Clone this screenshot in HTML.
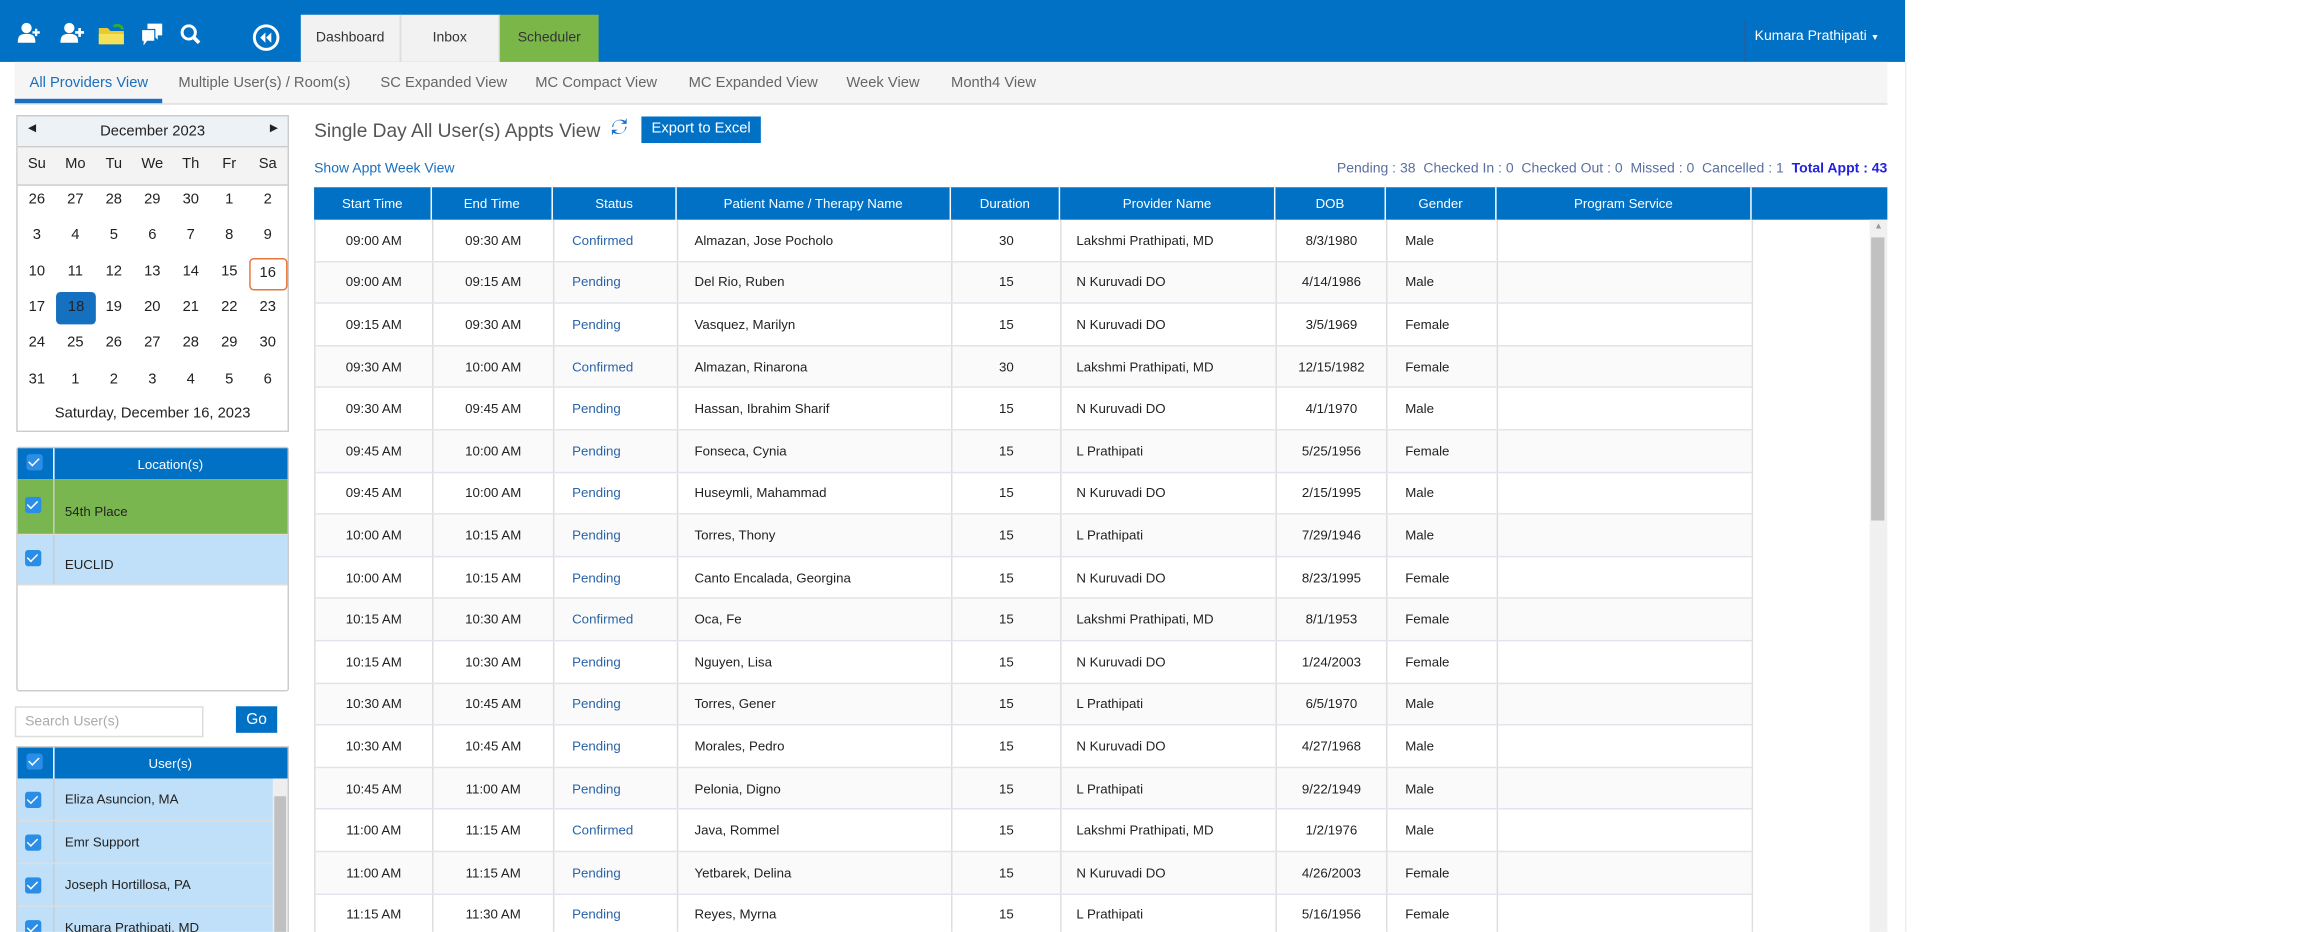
<!DOCTYPE html>
<html><head><meta charset="utf-8">
<style>
html,body{margin:0;padding:0;width:2312px;height:931px;overflow:hidden;background:#fff}
#w{position:absolute;left:0;top:0;width:1568px;height:632px;transform:scale(1.47449);transform-origin:0 0;font-family:"Liberation Sans",sans-serif;font-size:10px;color:#222;overflow:hidden}
.a{position:absolute}
.top{left:0;top:0;width:1292px;height:42px;background:#0071c5}
.tab{top:10px;height:32px;line-height:32px;text-align:center;font-size:9.5px;color:#333;background:#f2f2f2;border-right:1px solid #ddd}
.sub{left:10px;top:42px;width:1270px;height:28px;background:#f5f5f5;border-bottom:1px solid #ddd}
.sub span{position:absolute;top:9px;font-size:10px;color:#666}
.cal{left:11px;top:78px;width:183px;height:213px;border:1px solid #ccc}
.cal .d{position:absolute;width:26px;text-align:center;font-size:10px}
table{border-collapse:collapse}
.grid td{border-right:1px solid #ddd;border-bottom:1px solid #e2e4ec;height:27.6px;font-size:9px;padding:0}
.grid tr:nth-child(even) td{background:#fafafa}
.hd{left:213px;top:127px;height:22px;background:#0071c5;color:#fff;font-size:9px}
.hd div{position:absolute;top:0;height:22px;line-height:22px;text-align:center;border-right:1px solid #fff}
.cb{position:absolute;width:11px;height:11px;background:#2b8ee6;border-radius:2px}
.cb:after{content:"";position:absolute;left:3px;top:1px;width:3px;height:6px;border:solid #fff;border-width:0 1.5px 1.5px 0;transform:rotate(45deg)}
.box{left:11px;width:183px;border:1px solid #ccc}
.bh{position:absolute;left:0;top:0;width:183px;height:21px;background:#0071c5;color:#fff;font-size:9px}
.row{position:absolute;left:0;width:183px;border-bottom:1px solid #ddd}
.row .t{position:absolute;left:32px;font-size:9px}
.row .sep{position:absolute;left:24px;top:0;bottom:0;border-left:1px solid #ccc}
</style></head><body><div id="w">
<div class="a top"></div>
<svg class="a" style="left:12px;top:15px" width="140" height="20" viewBox="0 0 140 20" fill="#fff">
<circle cx="6" cy="4" r="3.5"/><path d="M0 14c0-5 2-6 6-6s6 1 6 6z"/><path d="M10 7h5M12.5 4.5v5" stroke="#fff" stroke-width="1.6"/>
<circle cx="35" cy="4" r="3.5"/><path d="M29 14c0-5 2-6 6-6s6 1 6 6z"/><path d="M39 7h6M42 4v6" stroke="#fff" stroke-width="1.8"/>
<path d="M55 4h6l2 2h9v9H55z" fill="#e8c930"/><path d="M55 8h17v7H55z" fill="#f6e15a"/><path d="M65 3c3-2 6 0 6 2" stroke="#3a3" stroke-width="2" fill="none"/>
<path d="M88 1h10v8h-3v3l-3-3h-4z"/><path d="M84 5h9v8h-5l-3 4v-4h-1z" stroke="#0071c5" stroke-width="0.8"/>
<circle cx="116" cy="7" r="4.5" stroke="#fff" stroke-width="2" fill="none"/><path d="M119 10l4 4" stroke="#fff" stroke-width="2.5"/>
</svg>
<svg class="a" style="left:171px;top:16px" width="19" height="19" viewBox="0 0 19 19"><circle cx="9.5" cy="9.5" r="8" stroke="#fff" stroke-width="2" fill="none"/><path d="M9 6l-3.5 3.5L9 13zM13 6l-3.5 3.5L13 13z" fill="#fff"/></svg>
<div class="a tab" style="left:204px;width:67px">Dashboard</div>
<div class="a tab" style="left:272px;width:66px">Inbox</div>
<div class="a tab" style="left:339px;width:67px;background:#7ab648;border:0">Scheduler</div>
<div class="a" style="left:1183px;top:14px;height:28px;border-left:1px solid #2a5f99"></div>
<div class="a" style="left:1190px;top:19px;color:#fff;font-size:9.5px">Kumara Prathipati <span style="font-size:6px">▼</span></div>
<div class="a" style="left:1292px;top:42px;height:590px;border-left:1px solid #eee"></div>
<div class="a sub">
<span style="left:10px;color:#1a6fbf">All Providers View</span>
<div class="a" style="left:0;top:25px;width:100px;height:3px;background:#1a6fbf"></div>
<span style="left:111px">Multiple User(s) / Room(s)</span>
<span style="left:248px">SC Expanded View</span>
<span style="left:353px">MC Compact View</span>
<span style="left:457px">MC Expanded View</span>
<span style="left:564px">Week View</span>
<span style="left:635px">Month4 View</span>
</div>
<div class="a cal">
<div class="a" style="left:0;top:0;width:183px;height:20px;background:#edf2f7;border-bottom:1px solid #ccc"></div>
<div class="a" style="left:7px;top:4px;font-size:7px">◀</div>
<div class="a" style="left:0;width:183px;top:5px;text-align:center;font-size:10px">December 2023</div>
<div class="a" style="left:171px;top:4px;font-size:7px">▶</div>
<div class="a" style="left:0;top:21px;width:183px;height:25px;background:#f3f3f3;border-bottom:1px solid #ccc"></div>
<div id="cd"></div>
<div class="a" style="left:0;width:183px;top:196px;text-align:center;font-size:10px">Saturday, December 16, 2023</div>
</div>
<div class="a box" style="top:303px;height:164px;border-radius:2px">
<div class="bh"><div class="cb" style="left:6px;top:4px"></div><div class="a" style="left:24px;top:0;height:21px;border-left:1px solid #fff"></div><div class="a" style="left:24px;width:159px;top:6px;text-align:center">Location(s)</div></div>
<div class="row" style="top:21px;height:37px;background:#7ab650"><div class="cb" style="left:5px;top:12px"></div><div class="sep"></div><div class="t" style="top:17px">54th Place</div></div>
<div class="row" style="top:59px;height:33px;background:#bfe0f8"><div class="cb" style="left:5px;top:10px"></div><div class="sep"></div><div class="t" style="top:15px">EUCLID</div></div>
</div>
<div class="a" style="left:10px;top:479px;width:126px;height:19px;border:1px solid #ddd;color:#aaa;font-size:9.5px;line-height:19px;text-indent:6px">Search User(s)</div>
<div class="a" style="left:160px;top:479px;width:28px;height:18px;background:#0071c5;color:#fff;text-align:center;line-height:18px;font-size:10.5px">Go</div>
<div class="a box" style="top:506px;height:130px">
<div class="bh"><div class="cb" style="left:6px;top:4px"></div><div class="a" style="left:24px;top:0;height:21px;border-left:1px solid #fff"></div><div class="a" style="left:24px;width:159px;top:6px;text-align:center">User(s)</div></div>
<div class="row" style="top:21px;height:28px;background:#bfe0f8"><div class="cb" style="left:5px;top:9px"></div><div class="sep"></div><div class="t" style="top:9px">Eliza Asuncion, MA</div></div>
<div class="row" style="top:50px;height:28px;background:#bfe0f8"><div class="cb" style="left:5px;top:9px"></div><div class="sep"></div><div class="t" style="top:9px">Emr Support</div></div>
<div class="row" style="top:79px;height:28px;background:#bfe0f8"><div class="cb" style="left:5px;top:9px"></div><div class="sep"></div><div class="t" style="top:9px">Joseph Hortillosa, PA</div></div>
<div class="row" style="top:108px;height:28px;background:#bfe0f8"><div class="cb" style="left:5px;top:9px"></div><div class="sep"></div><div class="t" style="top:9px">Kumara Prathipati, MD</div></div>
<div class="a" style="left:173px;top:21px;width:10px;height:110px;background:#eee"><div class="a" style="left:1px;top:12px;width:8px;height:100px;background:#c0c0c0"></div></div>
</div>
<div class="a" style="left:213px;top:81px;font-size:13px;color:#555">Single Day All User(s) Appts View</div>
<svg class="a" style="left:414px;top:78px" width="12" height="16" viewBox="0 0 12 16"><path d="M2 8a4 4 0 0 1 7-3l-2 1h4V2l-1 2A6 6 0 0 0 1 8z" fill="#1a6fd0"/><path d="M10 8a4 4 0 0 1-7 3l2-1H1v4l1-2a6 6 0 0 0 9-4z" fill="#1a6fd0"/></svg>
<div class="a" style="left:435px;top:79px;width:81px;height:18px;background:#0071c5;color:#fff;font-size:10px;text-align:center;line-height:18px">Export to Excel</div>
<div class="a" style="left:213px;top:109px;color:#1a6fbf;font-size:9.5px">Show Appt Week View</div>
<div class="a" style="left:800px;width:480px;top:109px;text-align:right;font-size:9.5px;color:#5a6fa0">Pending : 38&nbsp; Checked In : 0&nbsp; Checked Out : 0&nbsp; Missed : 0&nbsp; Cancelled : 1&nbsp; <b style="color:#2222dd">Total Appt : 43</b></div>
<div class="a hd" style="width:1067px">
<div style="left:0;width:79px">Start Time</div><div style="left:80px;width:81px">End Time</div><div style="left:162px;width:83px">Status</div><div style="left:246px;width:185px">Patient Name / Therapy Name</div><div style="left:432px;width:73px">Duration</div><div style="left:506px;width:145px">Provider Name</div><div style="left:652px;width:74px">DOB</div><div style="left:727px;width:74px">Gender</div><div style="left:802px;width:172px">Program Service</div>
</div>
<div class="a" style="left:213px;top:149px;width:975px;height:490px;border-left:1px solid #ddd;overflow:hidden">
<table class="grid" id="tb" style="width:975px"></table></div>
<div class="a" style="left:1268px;top:149px;width:12px;height:490px;background:#f0f0f0"><div class="a" style="left:3px;top:2px;font-size:6px;color:#999">▲</div><div class="a" style="left:1px;top:12px;width:9px;height:192px;background:#c1c1c1"></div></div>
</div>
<script>
var cd=document.getElementById('cd'),h='';
var dn=['Su','Mo','Tu','We','Th','Fr','Sa'];
for(var i=0;i<7;i++)h+='<div class="d" style="left:'+(i*26.1)+'px;top:27px">'+dn[i]+'</div>';
var ds=[26,27,28,29,30,1,2,3,4,5,6,7,8,9,10,11,12,13,14,15,16,17,18,19,20,21,22,23,24,25,26,27,28,29,30,31,1,2,3,4,5,6];
for(var k=0;k<42;k++){var r=Math.floor(k/7),c=k%7,st='left:'+(c*26.1)+'px;top:'+(51+r*24.3)+'px;';
if(k==20)st+='border:1px solid #e8763a;border-radius:3px;height:20px;line-height:20px;margin-top:-4px;width:24px;';
if(k==22)st+='background:#1670c0;border-radius:3px;height:22px;line-height:22px;margin-top:-5px;width:27px;';
h+='<div class="d" style="'+st+'">'+ds[k]+'</div>';}
cd.innerHTML=h;
var rows=[["09:00 AM","09:30 AM","Confirmed","Almazan, Jose Pocholo","30","Lakshmi Prathipati, MD","8/3/1980","Male"],
["09:00 AM","09:15 AM","Pending","Del Rio, Ruben","15","N Kuruvadi DO","4/14/1986","Male"],
["09:15 AM","09:30 AM","Pending","Vasquez, Marilyn","15","N Kuruvadi DO","3/5/1969","Female"],
["09:30 AM","10:00 AM","Confirmed","Almazan, Rinarona","30","Lakshmi Prathipati, MD","12/15/1982","Female"],
["09:30 AM","09:45 AM","Pending","Hassan, Ibrahim Sharif","15","N Kuruvadi DO","4/1/1970","Male"],
["09:45 AM","10:00 AM","Pending","Fonseca, Cynia","15","L Prathipati","5/25/1956","Female"],
["09:45 AM","10:00 AM","Pending","Huseymli, Mahammad","15","N Kuruvadi DO","2/15/1995","Male"],
["10:00 AM","10:15 AM","Pending","Torres, Thony","15","L Prathipati","7/29/1946","Male"],
["10:00 AM","10:15 AM","Pending","Canto Encalada, Georgina","15","N Kuruvadi DO","8/23/1995","Female"],
["10:15 AM","10:30 AM","Confirmed","Oca, Fe","15","Lakshmi Prathipati, MD","8/1/1953","Female"],
["10:15 AM","10:30 AM","Pending","Nguyen, Lisa","15","N Kuruvadi DO","1/24/2003","Female"],
["10:30 AM","10:45 AM","Pending","Torres, Gener","15","L Prathipati","6/5/1970","Male"],
["10:30 AM","10:45 AM","Pending","Morales, Pedro","15","N Kuruvadi DO","4/27/1968","Male"],
["10:45 AM","11:00 AM","Pending","Pelonia, Digno","15","L Prathipati","9/22/1949","Male"],
["11:00 AM","11:15 AM","Confirmed","Java, Rommel","15","Lakshmi Prathipati, MD","1/2/1976","Male"],
["11:00 AM","11:15 AM","Pending","Yetbarek, Delina","15","N Kuruvadi DO","4/26/2003","Female"],
["11:15 AM","11:30 AM","Pending","Reyes, Myrna","15","L Prathipati","5/16/1956","Female"]];
var t='';rows.forEach(function(r){t+='<tr><td style="width:79px;text-align:center">'+r[0]+'</td><td style="width:81px;text-align:center">'+r[1]+'</td><td style="width:71px;padding-left:12px;color:#2a64a8">'+r[2]+'</td><td style="width:174px;padding-left:11px">'+r[3]+'</td><td style="width:73px;text-align:center">'+r[4]+'</td><td style="width:135px;padding-left:10px">'+r[5]+'</td><td style="width:74px;text-align:center">'+r[6]+'</td><td style="width:62px;padding-left:12px">'+r[7]+'</td><td style="width:172px"></td></tr>';});
document.getElementById('tb').innerHTML=t;
</script>
</body></html>
